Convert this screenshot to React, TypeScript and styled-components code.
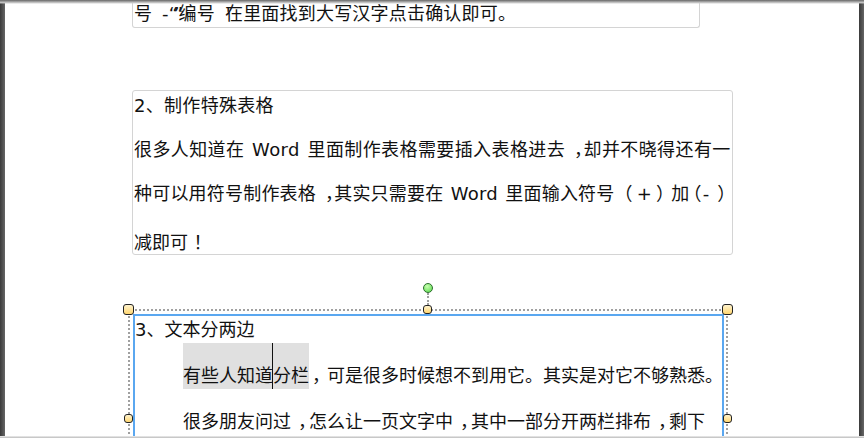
import React from "react";
import styled, { createGlobalStyle } from "styled-components";

const Global = createGlobalStyle`
  html, body { margin: 0; padding: 0; background: #fff; }
  body { font-family: "DejaVu Sans", "Noto Sans CJK SC", sans-serif; }
`;

const Window = styled.div`
  position: relative;
  width: 864px;
  height: 438px;
  display: flex;
  overflow: hidden;
  background: #fff;
`;

const SideEdge = styled.div`
  width: 5px;
  flex: none;
  background: linear-gradient(90deg, #3a3a3a, #666);
`;

const TopShade = styled.div`
  position: absolute;
  left: 0;
  right: 0;
  top: 0;
  height: 4px;
  background: linear-gradient(180deg, #666, #ccc 70%, rgba(255, 255, 255, 0));
`;

const BottomShade = styled.div`
  position: absolute;
  left: 0;
  right: 0;
  bottom: 0;
  height: 2px;
  background: linear-gradient(180deg, #eee, #bbb);
`;

const Page = styled.main`
  flex: 1;
  padding-left: 127px;
  display: flex;
  flex-direction: column;
  align-items: flex-start;
`;

const TextBox = styled.section<{ $w: number; $h: number; $open?: boolean }>`
  box-sizing: border-box;
  width: ${(p) => p.$w}px;
  height: ${(p) => p.$h}px;
  flex: none;
  border: 1px solid #d4d4d4;
  border-top-width: ${(p) => (p.$open ? 0 : 1)}px;
  border-radius: ${(p) => (p.$open ? "0 0 3px 3px" : "3px")};
  padding-left: 1px;
  margin-bottom: 62px;
`;

const Line = styled.p<{ $h: number; $indent?: boolean; $gap?: number; $ls?: number; $ws?: number }>`
  margin: ${(p) => p.$gap ?? 0}px 0 0;
  height: ${(p) => p.$h}px;
  line-height: ${(p) => p.$h}px;
  padding-left: ${(p) => (p.$indent ? 48 : 0)}px;
  font-size: 18px;
  letter-spacing: ${(p) => p.$ls ?? 0}px;
  word-spacing: ${(p) => p.$ws ?? 0}px;
  color: #111;
  white-space: nowrap;
`;

const Comma = styled.span<{ $lead?: number }>`
  font-feature-settings: "halt";
  padding-left: ${(p) => p.$lead ?? 9}px;
  padding-right: ${(p) => 9 - (p.$lead ?? 9)}px;
`;

const Bang = styled.span`
  font-feature-settings: "halt";
  padding: 0 3.5px 0 5.5px;
`;

const Paren = styled.span<{ $before?: number; $after?: number }>`
  margin-left: ${(p) => p.$before ?? 0}px;
  margin-right: ${(p) => p.$after ?? 0}px;
`;

const Quotes = styled.span`
  letter-spacing: -4.5px;
`;

const Stray = styled.span`
  margin-left: 1px;
  margin-right: -6px;
`;

const Frame = styled.section`
  position: relative;
  box-sizing: border-box;
  flex: none;
  width: 600px;
  height: 200px;
  margin: -8px 0 0 -4px;
  border: 2px dotted #a0a0a0;
  padding: 3px;
`;

const Editor = styled.div`
  box-sizing: border-box;
  height: 200px;
  width: 591px;
  border: 2px solid #5aa7f0;
  border-bottom: 0;
`;

const Handle = styled.span<{ $x: number; $y: number; $size?: number }>`
  position: absolute;
  box-sizing: border-box;
  left: ${(p) => p.$x}px;
  top: ${(p) => p.$y}px;
  width: ${(p) => p.$size ?? 11}px;
  height: ${(p) => p.$size ?? 11}px;
  border: 1px solid #222;
  border-radius: 3px;
  background: linear-gradient(180deg, #fff4cf, #ffd671);
`;

const RotateKnob = styled.span`
  position: absolute;
  box-sizing: border-box;
  left: 293px;
  top: -28px;
  width: 10px;
  height: 10px;
  border: 1px solid #2c6e2c;
  border-radius: 50%;
  background: radial-gradient(circle at 40% 30%, #c8ffb0, #55d94a);
`;

const RotateStem = styled.span`
  position: absolute;
  left: 297px;
  top: -18px;
  height: 12px;
  border-left: 2px dotted #a0a0a0;
`;

const Highlight = styled.span`
  display: inline-block;
  position: relative;
  background: #e0e0e0;
  height: 46px;
  line-height: 66px;
  vertical-align: top;
`;

const Caret = styled.i`
  position: absolute;
  left: 89px;
  top: 0;
  height: 46px;
  border-left: 1px solid #111;
`;

const SelLine = styled.p`
  margin: 0;
  height: 46px;
  line-height: 66px;
  padding-left: 48px;
  font-size: 18px;
  color: #111;
  white-space: nowrap;
`;

export default function App() {
  return (
    <Window>
      <Global />
      <SideEdge />
      <Page>
        <TextBox $w={568} $h={28} $open>
          <Line $h={28} $ls={0.2} $ws={4}>号 -<Quotes>“”</Quotes>编号 <Stray>'</Stray>在里面找到大写汉字点击确认即可。</Line>
        </TextBox>
        <TextBox $w={601} $h={165}>
          <Line $h={24} $gap={3} $ls={0.3}>2、制作特殊表格</Line>
          <Line $h={24} $gap={20} $ls={0.4} $ws={1.5}>很多人知道在 Word 里面制作表格需要插入表格进去<Comma>，</Comma>却并不晓得还有一</Line>
          <Line $h={24} $gap={20} $ls={0.2} $ws={1.5}>种可以用符号制作表格<Comma>，</Comma>其实只需要在 Word 里面输入符号（<Paren $before={4}>+</Paren><Paren $before={4} $after={-3}>）</Paren>加<Paren $before={-6}>（</Paren><Paren $before={1}>-</Paren><Paren $before={8}>）</Paren></Line>
          <Line $h={24} $gap={25}>减即可<Bang>！</Bang></Line>
        </TextBox>
        <Frame>
          <RotateKnob />
          <RotateStem />
          <Handle $x={-7} $y={-7} />
          <Handle $x={293} $y={-6} $size={9} />
          <Handle $x={592} $y={-7} />
          <Handle $x={-6} $y={103} $size={9} />
          <Handle $x={593} $y={103} $size={9} />
          <Editor>
            <Line $h={27}>3、文本分两边</Line>
            <SelLine>
              <Highlight>有些人知道分栏<Caret /></Highlight><Comma $lead={3}>，</Comma>可是很多时候想不到用它。其实是对它不够熟悉。
            </SelLine>
            <Line $h={66} $indent>很多朋友问过<Comma $lead={7}>，</Comma>怎么让一页文字中<Comma $lead={7}>，</Comma>其中一部分开两栏排布<Comma $lead={7}>，</Comma>剩下</Line>
          </Editor>
        </Frame>
      </Page>
      <SideEdge />
      <TopShade />
      <BottomShade />
    </Window>
  );
}
